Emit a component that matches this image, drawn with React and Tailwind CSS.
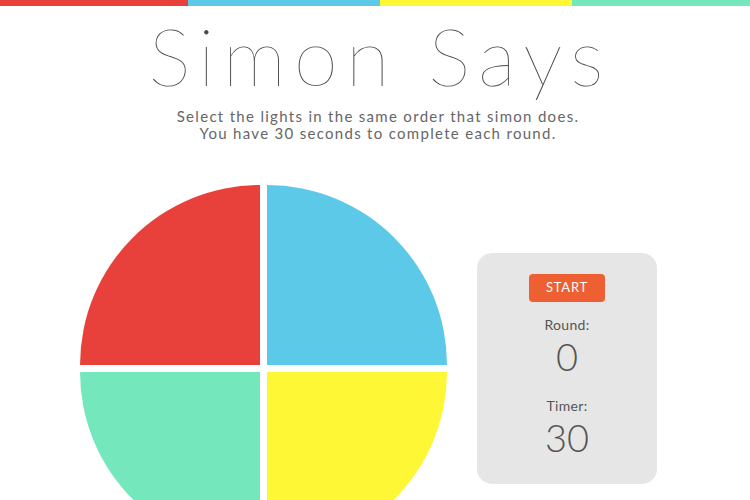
import React from "react";

const Quadrant = ({ color, corner }) => (
  <div className={`w-[180px] h-[180px] ${color} ${corner} cursor-pointer`} />
);

export default function App() {
  return (
    <div className="min-h-screen bg-white font-['Lato','Open_Sans',sans-serif] text-[#555]">
      {/* color strip */}
      <div className="flex h-[6px]">
        <div className="w-[188px] bg-[#e8403a]" />
        <div className="w-[192px] bg-[#5bc9e7]" />
        <div className="w-[192px] bg-[#fef735]" />
        <div className="flex-1 bg-[#74e8bc]" />
      </div>

      <h1 className="text-center text-[80px] leading-[78px] font-extralight tracking-[8px] mt-[10px] pl-[10px] text-[#4a4a4a]">
        Simon Says
      </h1>

      <p className="text-center text-[15px] leading-[17px] tracking-[1.3px] text-[#666] mt-[14px] pl-[6px]">
        Select the lights in the same order that simon does.
        <br />
        You have 30 seconds to complete each round.
      </p>

      <div className="flex items-center gap-[30px] pl-[80px] mt-[43px]">
        <div className="grid grid-cols-2 gap-[7px] w-[367px]">
          <Quadrant color="bg-[#e8403a]" corner="rounded-tl-[180px]" />
          <Quadrant color="bg-[#5bc9e7]" corner="rounded-tr-[180px]" />
          <Quadrant color="bg-[#74e8bc]" corner="rounded-bl-[180px]" />
          <Quadrant color="bg-[#fef735]" corner="rounded-br-[180px]" />
        </div>

        <div className="w-[180px] h-[231px] bg-[#e6e6e6] rounded-[15px] flex flex-col items-center pt-[21px]">
          <button className="w-[76px] h-[28px] bg-[#ee5f32] rounded-[4px] text-white text-[13px] tracking-[0.8px]">
            START
          </button>
          <div className="mt-[14px] text-[14px] leading-[18px] text-[#555] tracking-[0.3px]">Round:</div>
          <div className="text-[38px] leading-[44px] font-light text-[#555]">0</div>
          <div className="mt-[19px] text-[14px] leading-[18px] text-[#555] tracking-[0.3px]">Timer:</div>
          <div className="text-[38px] leading-[44px] font-light text-[#555]">30</div>
        </div>
      </div>
    </div>
  );
}
